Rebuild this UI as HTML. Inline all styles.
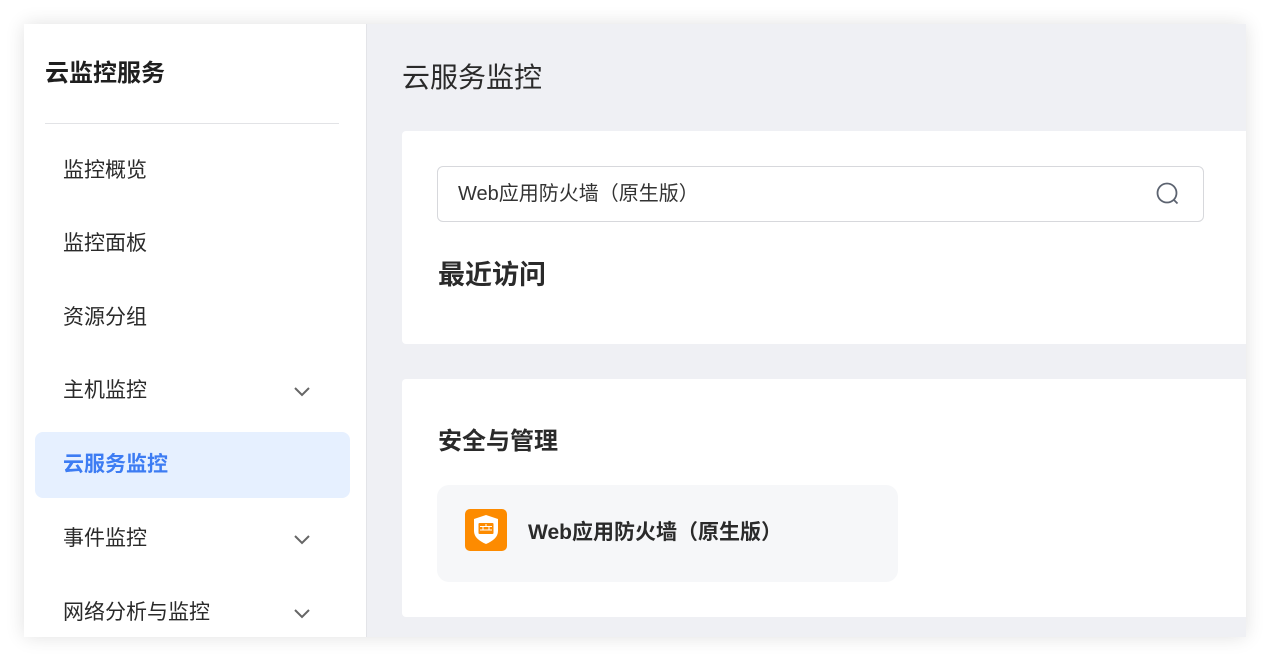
<!DOCTYPE html>
<html><head><meta charset="utf-8"><style>
*{margin:0;padding:0;box-sizing:border-box}
body{width:1270px;height:661px;background:#fff;font-family:"Liberation Sans","Noto Sans CJK SC",sans-serif;position:relative;overflow:hidden}
.wrap{position:absolute;left:24px;top:24px;width:1222px;height:613px;box-shadow:0 0 18px rgba(0,0,0,.12);background:#eff0f4;overflow:hidden}
.side{position:absolute;left:0;top:0;width:343px;height:613px;background:#fff;border-right:1px solid #e3e4e8}
.side h1{position:absolute;left:21px;top:29px;font-size:24px;font-weight:bold;color:#1f1f1f}
.side .hr{position:absolute;left:21px;top:99px;width:294px;height:1px;background:#e2e3e6}
.item{position:absolute;left:11px;width:315px;height:66px;line-height:66px;padding-left:28px;font-size:21px;color:#2a2a2a}
.item.act{background:#e6f0ff;color:#3d7cf3;font-weight:bold;border-radius:8px}
.item svg{position:absolute;right:39px;top:27px}
.main h2{position:absolute;left:378px;top:32px;font-size:28px;font-weight:normal;color:#2a2a2a}
.card{position:absolute;left:378px;width:860px;background:#fff;border-radius:4px}
.search{position:absolute;left:35px;top:35px;width:767px;height:56px;border:1.5px solid #d7d8dc;border-radius:6px;font-size:20px;color:#333;line-height:54px;padding-left:20px}
.search svg{position:absolute;right:22px;top:14px}
.t{position:absolute;left:36px;font-weight:bold;color:#2a2a2a}
.prod{position:absolute;left:35px;top:106px;width:461px;height:97px;background:#f6f7f9;border-radius:12px}
.prod .ic{position:absolute;left:28px;top:24px;width:42px;height:42px;background:#fd8b00;border-radius:5px}
.prod span{position:absolute;left:91px;top:31px;font-size:21px;font-weight:bold;color:#2a2a2a}
</style></head><body>
<div class="wrap">
<div class="side">
<h1>云监控服务</h1><div class="hr"></div>
<div class="item" style="top:114px">监控概览</div>
<div class="item" style="top:187px">监控面板</div>
<div class="item" style="top:261px">资源分组</div>
<div class="item" style="top:334px">主机监控<svg width="18" height="12" viewBox="0 0 18 12"><path d="M2 3l7 7 7-7" fill="none" stroke="#666" stroke-width="2"/></svg></div>
<div class="item act" style="top:408px">云服务监控</div>
<div class="item" style="top:482px">事件监控<svg width="18" height="12" viewBox="0 0 18 12"><path d="M2 3l7 7 7-7" fill="none" stroke="#666" stroke-width="2"/></svg></div>
<div class="item" style="top:556px">网络分析与监控<svg width="18" height="12" viewBox="0 0 18 12"><path d="M2 3l7 7 7-7" fill="none" stroke="#666" stroke-width="2"/></svg></div>
</div>
<div class="main">
<h2>云服务监控</h2>
<div class="card" style="top:107px;height:213px">
<div class="search">Web应用防火墙（原生版）<svg width="26" height="26" viewBox="0 0 26 26"><circle cx="12" cy="12" r="9.5" fill="none" stroke="#5c6370" stroke-width="1.8"/><path d="M18.5 18.5l4 4" stroke="#5c6370" stroke-width="1.8"/></svg></div>
<div class="t" style="top:122px;font-size:27px">最近访问</div>
</div>
<div class="card" style="top:355px;height:238px">
<div class="t" style="top:42px;font-size:24px">安全与管理</div>
<div class="prod"><div class="ic"><svg width="42" height="42" viewBox="0 0 42 42"><path d="M21 6l12 4v12c0 6-5 10-12 13C14 32 9 28 9 22V10z" fill="#fff"/><rect x="13.5" y="14" width="15" height="11" rx="1" fill="#fd8b00"/><path d="M15 17.5h12M15 21h12M21 15v2.5M18 17.5v3.5M24 17.5v3.5" stroke="#fff" stroke-width="1"/></svg></div><span>Web应用防火墙（原生版）</span></div>
</div>
</div>
</div>
</body></html>
